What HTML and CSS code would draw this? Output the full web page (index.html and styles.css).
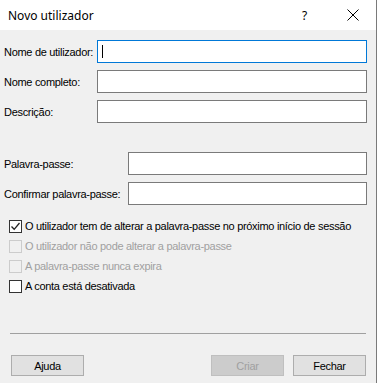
FILE: index.html
```html
<!DOCTYPE html>
<html>
<head>
<meta charset="utf-8">
<link rel="stylesheet" href="styles.css">
</head>
<body>
<div class="screen">
  <div class="window">
    <div class="titlebar">
      <span class="title">Novo utilizador</span>
      <span class="help">?</span>
      <span class="close"><svg width="12" height="12" viewBox="0 0 12 12"><path d="M0.5 0.5L11.5 11.5M11.5 0.5L0.5 11.5" stroke="#000" stroke-width="1" fill="none"/></svg></span>
    </div>
    <div class="body">
      <div class="fields">
        <div class="row"><label>Nome de utilizador:</label><div class="input focus"><span class="caret"></span></div></div>
        <div class="row"><label>Nome completo:</label><div class="input"></div></div>
        <div class="row"><label>Descrição:</label><div class="input"></div></div>
      </div>
      <div class="fields pw">
        <div class="row"><label>Palavra-passe:</label><div class="input"></div></div>
        <div class="row"><label>Confirmar palavra-passe:</label><div class="input"></div></div>
      </div>
      <div class="checks">
        <div class="check"><span class="box checked"><svg width="11" height="11" viewBox="0 0 11 11"><path d="M1.5 5.5L4.2 8.3L9.5 2" stroke="#222" stroke-width="1.3" fill="none"/></svg></span><span>O utilizador tem de alterar a palavra-passe no próximo início de sessão</span></div>
        <div class="check disabled"><span class="box"></span><span>O utilizador não pode alterar a palavra-passe</span></div>
        <div class="check disabled"><span class="box"></span><span>A palavra-passe nunca expira</span></div>
        <div class="check"><span class="box"></span><span>A conta está desativada</span></div>
      </div>
      <div class="sep"></div>
      <div class="buttons">
        <div class="btn">Ajuda</div>
        <div class="spacer"></div>
        <div class="btn disabled">Criar</div>
        <div class="btn">Fechar</div>
      </div>
    </div>
  </div>
</div>
</body>
</html>
```

FILE: styles.css
```css
html, body {
  margin: 0;
  padding: 0;
  background: #ffffff;
}
.screen {
  width: 380px;
  height: 383px;
  overflow: hidden;
  background: #ffffff;
}
.window {
  width: 376px;
  height: 383px;
  border-right: 1px solid #7a7a7a;
  background: #f0f0f0;
  display: flex;
  flex-direction: column;
  font-family: "Liberation Sans", Arial, sans-serif;
  font-size: 11px;
  letter-spacing: -0.3px;
  color: #000;
}
.titlebar {
  height: 30px;
  background: #ffffff;
  display: flex;
  align-items: center;
  font-family: "Noto Sans", "Open Sans", sans-serif;
  font-size: 12px;
  letter-spacing: 0;
}
.title {
  margin-left: 8px;
  flex: 1;
}
.help {
  width: 10px;
  margin-right: 35px;
  font-size: 12px;
}
.close {
  width: 12px;
  height: 12px;
  margin-right: 17px;
  display: flex;
}
.body {
  flex: 1;
  display: flex;
  flex-direction: column;
  padding: 10px 9px 0 4px;
}
.fields {
  display: flex;
  flex-direction: column;
  gap: 7px;
}
.fields.pw {
  margin-top: 29px;
}
.row {
  display: flex;
  align-items: center;
  height: 23px;
}
.row label {
  width: 93px;
  white-space: nowrap;
}
.fields.pw .row label {
  width: 124px;
}
.input {
  flex: 1;
  height: 23px;
  box-sizing: border-box;
  background: #ffffff;
  border: 1px solid #7a7a7a;
  display: flex;
  align-items: center;
}
.input.focus {
  border-color: #0078d7;
}
.caret {
  width: 1px;
  height: 13px;
  background: #000;
  margin-left: 4px;
}
.checks {
  margin-top: 11px;
  padding-left: 5px;
  display: flex;
  flex-direction: column;
}
.check {
  height: 20px;
  display: flex;
  align-items: center;
  white-space: nowrap;
}
.box {
  width: 13px;
  height: 13px;
  box-sizing: border-box;
  border: 1px solid #333333;
  background: #ffffff;
  margin-right: 3px;
  display: flex;
  align-items: center;
  justify-content: center;
}
.check.disabled {
  color: #a0a0a0;
}
.check.disabled .box {
  border-color: #cccccc;
  background: #f0f0f0;
}
.sep {
  margin-top: 37px;
  margin-left: 6px;
  margin-right: 1px;
  height: 0;
  border-top: 1px solid #a0a0a0;
}
.buttons {
  margin-top: 21px;
  margin-left: 7px;
  margin-right: 1px;
  display: flex;
  gap: 9px;
}
.spacer {
  flex: 1;
}
.btn {
  width: 73px;
  height: 21px;
  box-sizing: border-box;
  background: #e1e1e1;
  border: 1px solid #adadad;
  display: flex;
  align-items: center;
  justify-content: center;
}
.btn.disabled {
  background: #cccccc;
  border-color: #bfbfbf;
  color: #a0a0a0;
}
```
